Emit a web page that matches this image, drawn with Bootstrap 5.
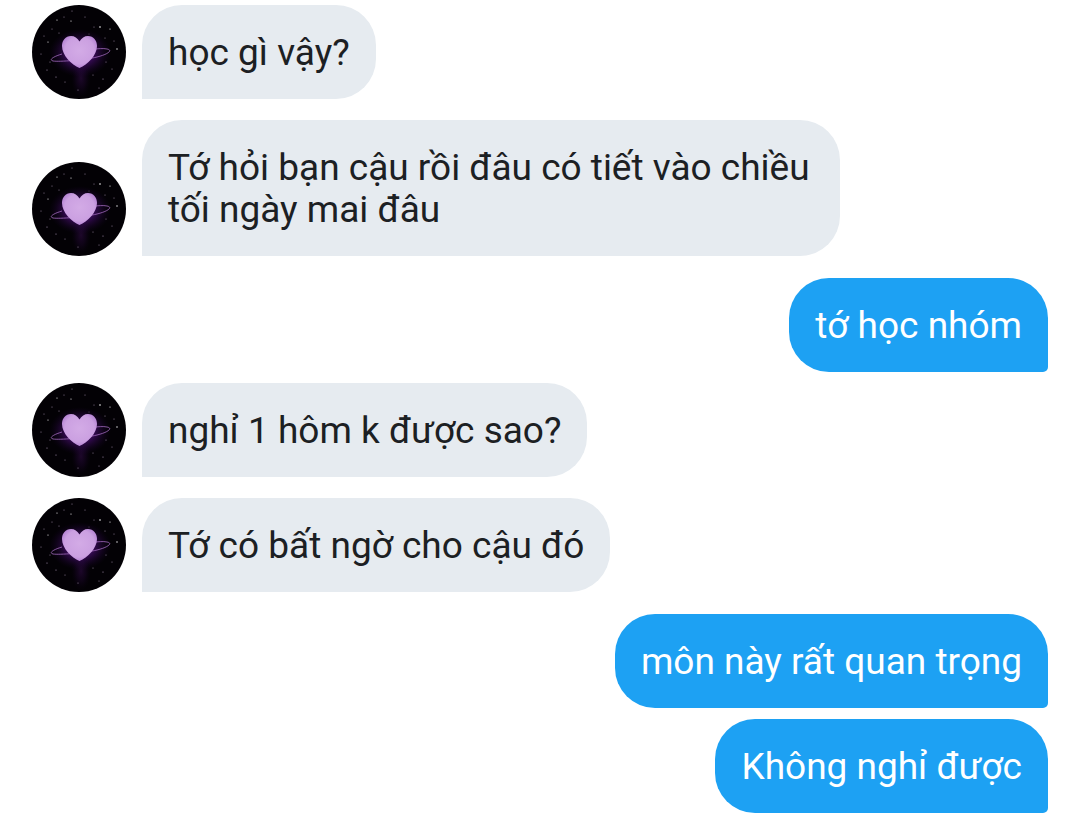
<!DOCTYPE html>
<html lang="vi">
<head>
<meta charset="utf-8">
<meta name="viewport" content="width=device-width, initial-scale=1">
<title>Tin nhắn</title>
<link href="https://cdn.jsdelivr.net/npm/bootstrap@5.3.0/dist/css/bootstrap.min.css" rel="stylesheet">
<style>
  body { font-family: Roboto, "Noto Sans", sans-serif; background: #fff; }
  .thread { padding: 5px 32px 8px; }
  .message { gap: 16px; }
  .message + .message { margin-top: 21px; }
  .incoming + .outgoing { margin-top: 22px; }
  .outgoing + .message { margin-top: 11px; }
  .avatar { width: 94px; height: 94px; }
  .bubble {
    max-width: 698px;
    padding: 27px 26px 25px;
    font-size: 37px;
    line-height: 42px;
    border-radius: 40px;
  }
  .incoming .bubble { background: #e6ebf0; color: #1c2023; border-bottom-left-radius: 0; }
  .outgoing .bubble { background: #1da1f3; color: #fff; border-bottom-right-radius: 5px; }
</style>
</head>
<body>
<svg class="position-absolute" width="0" height="0" aria-hidden="true">
  <defs>
    <radialGradient id="glow">
      <stop offset="0" stop-color="#7a1fb0" stop-opacity=".9"/>
      <stop offset=".5" stop-color="#4c0f76" stop-opacity=".6"/>
      <stop offset="1" stop-color="#1a0430" stop-opacity="0"/>
    </radialGradient>
    <radialGradient id="heartFill" cx=".5" cy=".45" r=".6">
      <stop offset="0" stop-color="#d3abe6"/>
      <stop offset=".7" stop-color="#cba0e1"/>
      <stop offset="1" stop-color="#ae7bcf"/>
    </radialGradient>
    <symbol id="heart-planet" viewBox="0 0 94 94">
      <circle cx="47" cy="47" r="47" fill="#030105"/>
      <ellipse cx="48" cy="48" rx="31" ry="24" fill="url(#glow)"/>
      <ellipse cx="49" cy="73" rx="10" ry="20" fill="url(#glow)" opacity=".25"/>
      <g fill="#fff">
        <circle cx="68" cy="22" r=".8"/><circle cx="78" cy="24" r=".6"/><circle cx="85" cy="44" r=".7"/>
        <circle cx="25" cy="15" r=".6"/><circle cx="39" cy="16" r=".6"/><circle cx="16" cy="37" r=".6"/>
      </g>
      <g fill="#a996b5">
        <circle cx="32" cy="12" r=".5"/><circle cx="53" cy="12" r=".5"/><circle cx="62" cy="22" r=".5"/>
        <circle cx="20" cy="24" r=".5"/><circle cx="27" cy="28" r=".5"/><circle cx="12" cy="31" r=".5"/>
        <circle cx="73" cy="33" r=".5"/><circle cx="82" cy="36" r=".5"/><circle cx="9" cy="49" r=".5"/>
        <circle cx="15" cy="65" r=".6"/><circle cx="24" cy="72" r=".6"/><circle cx="33" cy="77" r=".5"/>
        <circle cx="18" cy="57" r=".5"/><circle cx="61" cy="70" r=".5"/><circle cx="71" cy="74" r=".6"/>
        <circle cx="80" cy="64" r=".5"/><circle cx="67" cy="83" r=".5"/><circle cx="46" cy="85" r=".5"/>
        <circle cx="40" cy="6" r=".5"/><circle cx="57" cy="29" r=".4"/><circle cx="74" cy="57" r=".5"/>
      </g>
      <path d="M30 49C20 52 17 55 21 56C27 57 53 55 65 52C77 49 81 45 75 44C71 43 66 44 61 44" fill="none" stroke="#a36bbf" stroke-width=".8"/>
      <path d="M47.500 36.500C45.500 33 42.500 31 39 31C33.500 31 30 35.500 30 41C30 50 39.500 60 47.500 63C55.500 60 65 50 65 41C65 35.500 61.500 31 56 31C52.500 31 49.500 33 47.500 36.500Z" fill="url(#heartFill)"/>
    </symbol>
  </defs>
</svg>

<main class="container-fluid thread">
  <ul class="list-unstyled d-flex flex-column mb-0">
    <li class="message incoming d-flex align-items-end">
      <svg class="avatar flex-shrink-0" role="img" aria-label="Ảnh đại diện"><use href="#heart-planet"/></svg>
      <p class="bubble mb-0">học gì vậy?</p>
    </li>
    <li class="message incoming d-flex align-items-end">
      <svg class="avatar flex-shrink-0" role="img" aria-label="Ảnh đại diện"><use href="#heart-planet"/></svg>
      <p class="bubble mb-0">Tớ hỏi bạn cậu rồi đâu có tiết vào chiều tối ngày mai đâu</p>
    </li>
    <li class="message outgoing d-flex justify-content-end">
      <p class="bubble mb-0">tớ học nhóm</p>
    </li>
    <li class="message incoming d-flex align-items-end">
      <svg class="avatar flex-shrink-0" role="img" aria-label="Ảnh đại diện"><use href="#heart-planet"/></svg>
      <p class="bubble mb-0">nghỉ 1 hôm k được sao?</p>
    </li>
    <li class="message incoming d-flex align-items-end">
      <svg class="avatar flex-shrink-0" role="img" aria-label="Ảnh đại diện"><use href="#heart-planet"/></svg>
      <p class="bubble mb-0">Tớ có bất ngờ cho cậu đó</p>
    </li>
    <li class="message outgoing d-flex justify-content-end">
      <p class="bubble mb-0">môn này rất quan trọng</p>
    </li>
    <li class="message outgoing d-flex justify-content-end">
      <p class="bubble mb-0">Không nghỉ được</p>
    </li>
  </ul>
</main>
<script src="https://cdn.jsdelivr.net/npm/bootstrap@5.3.0/dist/js/bootstrap.bundle.min.js"></script>
</body>
</html>
